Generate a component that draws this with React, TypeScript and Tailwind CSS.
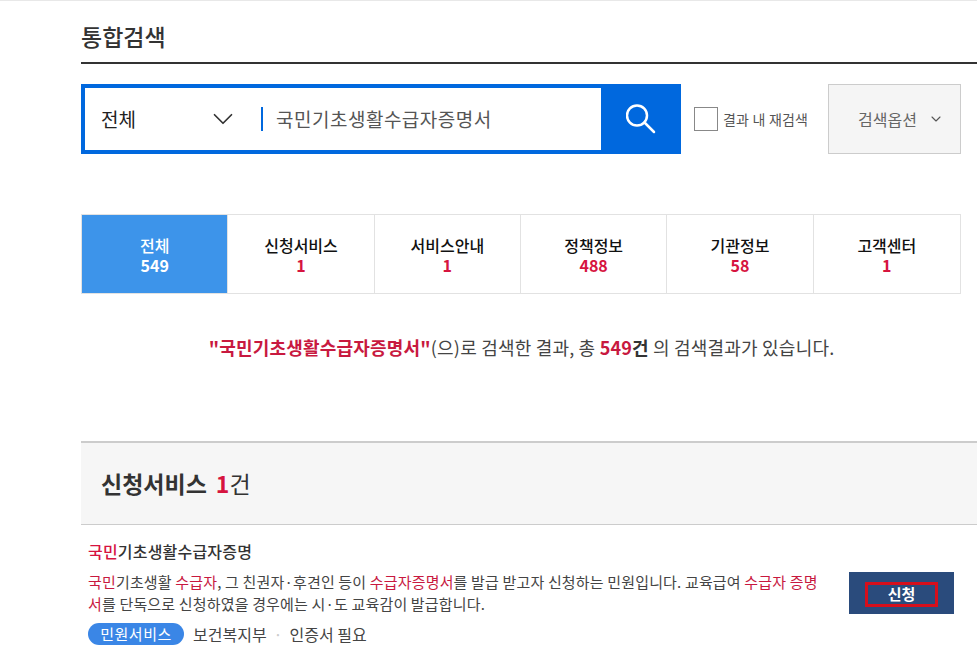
import { ChevronDown } from 'lucide-react';

const tabs = [
  { label: '전체', count: '549', active: true },
  { label: '신청서비스', count: '1' },
  { label: '서비스안내', count: '1' },
  { label: '정책정보', count: '488' },
  { label: '기관정보', count: '58' },
  { label: '고객센터', count: '1' },
];

const font = "font-['Noto_Sans_CJK_KR','Noto_Sans',sans-serif]";

export default function App() {
  return (
    <div className={`${font} h-[657px] w-[977px] overflow-hidden border-t border-[#e8e8e8] bg-white text-[#333]`}>
      <div className="pl-[81px]">
        <h1 className="flex h-[63px] items-center border-b-2 border-[#333] pt-[9px] text-[23px] leading-none font-medium text-[#333]">
          통합검색
        </h1>

        {/* 검색 영역 */}
        <div className="mt-5 flex h-[70px] items-stretch">
          <div className="flex w-[600px] border-4 border-r-0 border-[#0068de]">
            <div className="flex w-[176px] items-center justify-between pr-[21px] pl-4 text-[19px] text-[#222]">
              <span>전체</span>
              <ChevronDown size={34} strokeWidth={1.2} className="text-[#333]" />
            </div>
            <div className="my-[19px] w-[2px] bg-[#0068de]" />
            <div className="flex flex-1 items-center pl-[13px] text-[19px] tracking-[0.5px] text-[#555]">국민기초생활수급자증명서</div>
            <div className="flex w-[80px] items-center justify-center bg-[#0068de]">
              <svg width="30" height="30" viewBox="0 0 30 30" fill="none" stroke="white" strokeWidth="2.5" strokeLinecap="round">
                <circle cx="11" cy="11.5" r="10" />
                <path d="M18.5 18.5L28 28" />
              </svg>
            </div>
          </div>
          <div className="ml-[13px] flex w-[134px] items-center">
            <div className="h-6 w-6 shrink-0 border border-[#888] bg-white" />
            <span className="ml-[5px] text-[14px] tracking-[0.2px] text-[#555]">결과 내 재검색</span>
          </div>
          <div className="flex w-[133px] items-center justify-center gap-[11px] border border-[#ccc] bg-[#f5f5f5] pl-[13px] text-[16px] text-[#666]">
            <span>검색옵션</span>
            <ChevronDown size={16} strokeWidth={1.6} className="text-[#555]" />
          </div>
        </div>

        {/* 탭 */}
        <div className="mt-[60px] grid h-[80px] w-[880px] grid-cols-6 border border-[#e2e2e2]">
          {tabs.map((tab) => (
            <div
              key={tab.label}
              className={`flex flex-col items-center justify-center border-r border-[#e2e2e2] pt-[2px] text-[16px] leading-[20px] font-medium last:border-r-0 ${
                tab.active ? 'bg-[#3d94ea] text-white' : 'bg-white text-[#111]'
              }`}
            >
              <span>{tab.label}</span>
              <span className={tab.active ? 'font-bold text-white' : 'font-bold text-[#d6143f]'}>{tab.count}</span>
            </div>
          ))}
        </div>

        <p className="mt-[40px] h-[26px] w-[881px] text-center text-[18px] leading-[26px] tracking-[0.2px] text-[#444]">
          <b className="text-[#c8193f]">"국민기초생활수급자증명서"</b>(으)로 검색한 결과, 총{' '}
          <b className="text-[#c8193f]">549</b>
          <b className="text-[#333]">건</b> 의 검색결과가 있습니다.
        </p>

        {/* 신청서비스 */}
        <div className="mt-[81px] flex h-[84px] items-center border-t-2 border-b border-t-[#ccc] border-b-[#ccc] bg-[#f6f6f6] pb-[1px] pl-5 text-[23px]">
          <b className="font-bold text-[#333]">신청서비스</b>
          <b className="ml-[9px] font-bold text-[#d6143f]">1</b>
          <span className="text-[#333]">건</span>
        </div>

        <div className="flex pt-[13px] pl-[7px]">
          <div className="w-[735px]">
            <div className="text-[16px] leading-[27px] font-medium tracking-[0.2px] text-[#333]">
              <span className="text-[#d6143f]">국민</span>기초생활수급자증명
            </div>
            <p className="mt-[6px] text-[15px] leading-[22px] tracking-[0.16px] text-[#444]">
              <span className="text-[#c8193f]">국민</span>기초생활 <span className="text-[#c8193f]">수급자</span>, 그 친권자·후견인 등이{' '}
              <span className="text-[#c8193f]">수급자증명서</span>를 발급 받고자 신청하는 민원입니다. 교육급여{' '}
              <span className="text-[#c8193f]">수급자 증명서</span>를 단독으로 신청하였을 경우에는 시·도 교육감이 발급합니다.
            </p>
            <div className="mt-[8px] flex items-center text-[16px] leading-[22px] text-[#444]">
              <span className="flex h-[22px] w-[96px] items-center justify-center rounded-full bg-[#3a86e6] text-[15px] tracking-[0.5px] text-white">민원서비스</span>
              <span className="ml-[9px]">보건복지부</span>
              <span className="mx-[7px] text-[#ccc]">·</span>
              <span>인증서 필요</span>
            </div>
          </div>
          <div className="mt-[34px] ml-[26px] flex h-[42px] w-[105px] items-center justify-center bg-[#2a4b7c] pt-[3px]">
            <span className="flex h-[25px] w-[73px] items-center justify-center border-[3px] border-[#d60f1c] text-[15px] font-bold text-white">
              신청
            </span>
          </div>
        </div>
      </div>
    </div>
  );
}
